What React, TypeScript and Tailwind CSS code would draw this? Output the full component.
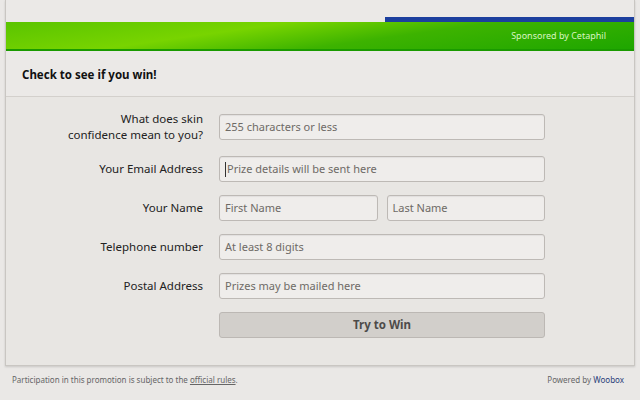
import React from "react";

const font = { fontFamily: '"Noto Sans", "DejaVu Sans", sans-serif' };

function Field({ placeholder, caret }: { placeholder: string; caret?: boolean }) {
  return (
    <div className="h-[26px] flex-1 rounded-[3px] border border-[#bdb9b5] bg-[#efedeb] shadow-[inset_0_1px_1px_rgba(0,0,0,0.06)] flex items-center px-[5px] text-[11px] text-[#6e6a66]">
      {caret && <span className="inline-block w-px h-[15px] bg-[#333] mr-px" />}
      {placeholder}
    </div>
  );
}

function Row({ label, children, two }: { label: React.ReactNode; children: React.ReactNode; two?: boolean }) {
  return (
    <div className="flex items-center">
      <div className="w-[197px] text-right text-[11.5px] leading-[16px] text-[#222]">{label}</div>
      <div className={`ml-[16px] w-[326px] flex ${two ? "gap-[9px]" : ""}`}>{children}</div>
    </div>
  );
}

export default function App() {
  return (
    <div className="w-[640px] h-[400px] bg-[#eae8e6] overflow-hidden" style={font}>
      <div className="mx-[5px] w-[630px] h-[366px] border-x border-b border-[#c9c6c2] bg-[#e9e7e4] shadow-[0_1px_2px_rgba(0,0,0,0.15)] flex flex-col">
        <div className="h-[22px] bg-[#ebe9e7] flex justify-end">
          <div className="self-end w-[249px] h-[5px] bg-[#1c3f9e]" />
        </div>
        <div className="h-[29px] bg-[linear-gradient(172deg,#5ac400_0%,#78d400_35%,#3db300_60%,#1ea600_100%)] border-b-2 border-[#1a9a00] flex items-center justify-end pr-[28px]">
          <span className="text-[9px] text-[#d9f5c0]">Sponsored by Cetaphil</span>
        </div>
        <div className="h-[46px] bg-[#ebe9e7] border-b border-[#d3d0cc] flex items-center pl-[16px] pt-[2px] text-[11.5px] font-bold text-[#111]">
          Check to see if you win!
        </div>
        <div className="flex flex-col pt-[14px] gap-[13px] bg-[#e8e6e3] flex-1">
          <Row label={<>What does skin<br />confidence mean to you?</>}>
            <Field placeholder="255 characters or less" />
          </Row>
          <Row label="Your Email Address">
            <Field placeholder="Prize details will be sent here" caret />
          </Row>
          <Row label="Your Name" two>
            <Field placeholder="First Name" />
            <Field placeholder="Last Name" />
          </Row>
          <Row label="Telephone number">
            <Field placeholder="At least 8 digits" />
          </Row>
          <Row label="Postal Address">
            <Field placeholder="Prizes may be mailed here" />
          </Row>
          <Row label="">
            <div className="h-[26px] flex-1 rounded-[3px] border border-[#bcb8b4] bg-[#d2cfcb] flex items-center justify-center text-[11.5px] font-bold text-[#4d4b49]">
              Try to Win
            </div>
          </Row>
        </div>
      </div>
      <div className="flex justify-between pl-[12px] pr-[16px] pt-[8px] text-[8px] text-[#666]">
        <span>
          Participation in this promotion is subject to the <span className="underline">official rules</span>.
        </span>
        <span>
          Powered by <span className="text-[#2a3f7a]">Woobox</span>
        </span>
      </div>
    </div>
  );
}
